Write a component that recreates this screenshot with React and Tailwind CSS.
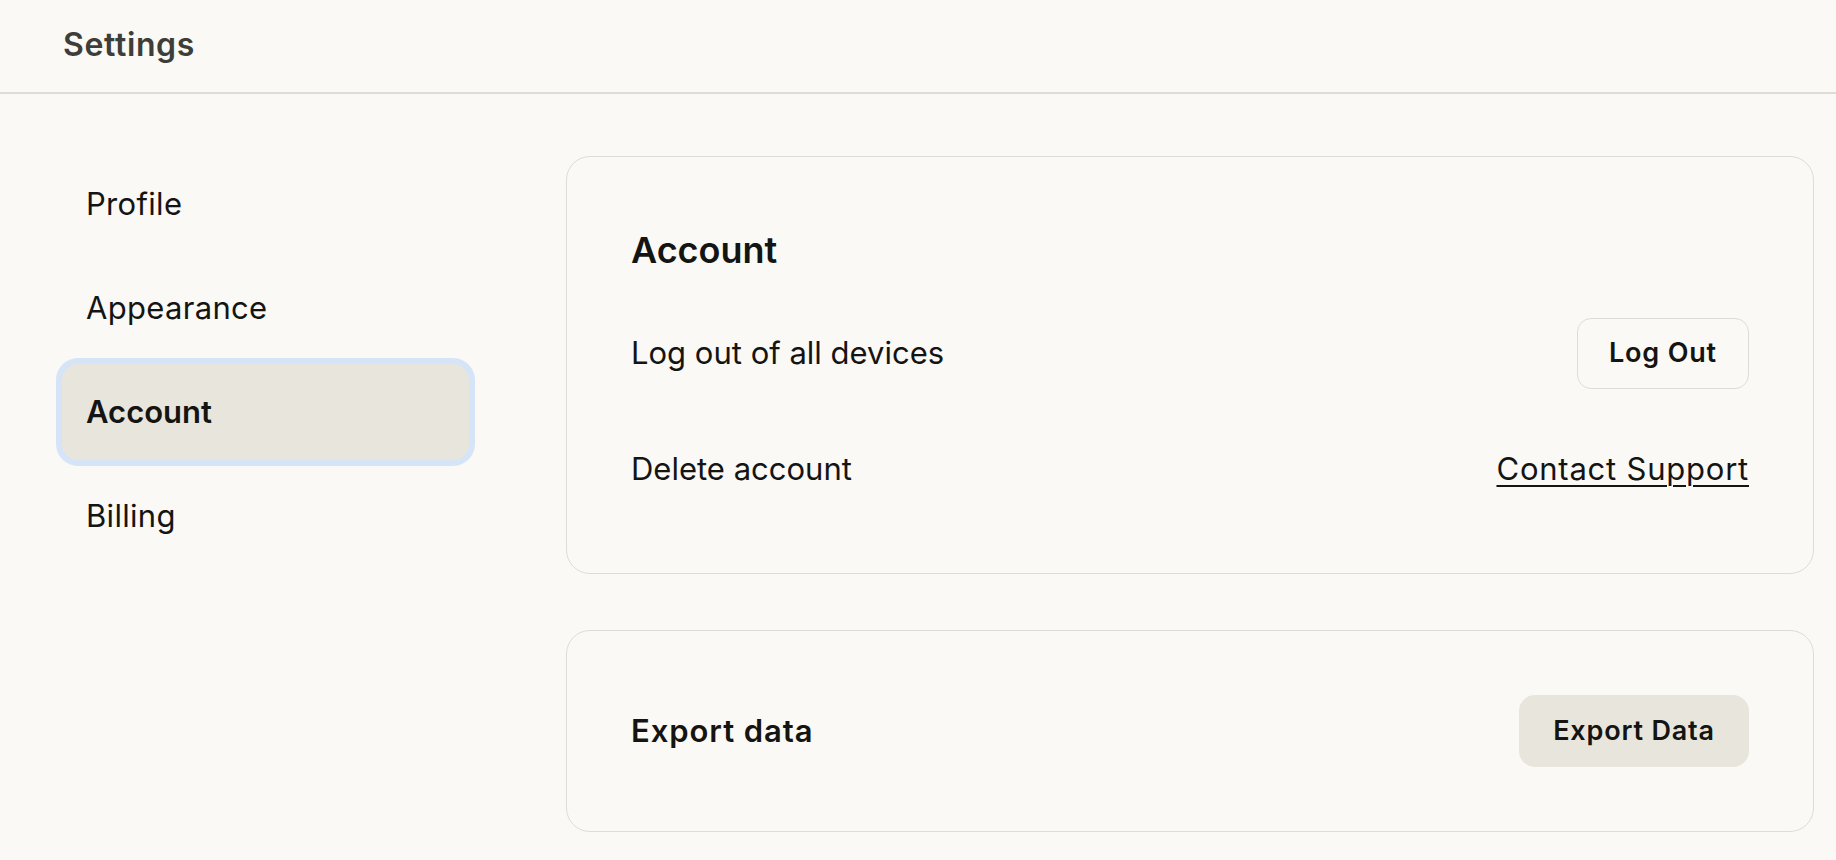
import React, { useState } from "react";

const navItems = ["Profile", "Appearance", "Account", "Billing"];

export default function App() {
  const [active, setActive] = useState("Account");

  return (
    <div
      className="min-h-screen bg-[#faf9f5] text-[#141413]"
      style={{ fontFamily: "Inter, 'Noto Sans', sans-serif" }}
    >
      <header className="h-[94px] border-b-2 border-[#dedcd6] flex items-center pl-[63px] pb-[3px]">
        <h1 className="text-[32px] font-semibold text-[#3d3d3a] tracking-[0.02em]">Settings</h1>
      </header>

      <div className="flex pl-[62px] pr-[22px] pt-[62px] pb-8">
        <nav className="w-[407px] shrink-0 flex flex-col gap-2">
          {navItems.map((item) => (
            <button
              key={item}
              onClick={() => setActive(item)}
              className={
                item === active
                  ? "h-[96px] px-6 flex items-center rounded-2xl bg-[#e8e6dc] ring-[6px] ring-[#d5e5f7] text-[31px] font-semibold text-left"
                  : "h-[96px] px-6 flex items-center rounded-2xl text-[31px] text-left tracking-[0.01em] hover:bg-[#f0eee6]"
              }
            >
              {item}
            </button>
          ))}
        </nav>

        <main className="flex-1 ml-[97px] flex flex-col gap-[56px]">
          <section className="border border-[#dedcd6] rounded-3xl px-16 pt-16 pb-[68px] flex flex-col">
            <h2 className="h-[48px] mt-[5px] flex items-center text-[36px] font-semibold">Account</h2>
            <div className="h-[72px] mt-[43px] flex items-center justify-between">
              <span className="text-[31px]">Log out of all devices</span>
              <button className="h-[71px] w-[172px] rounded-[14px] border border-[#dedcd6] text-[27px] font-semibold tracking-[0.03em]">
                Log Out
              </button>
            </div>
            <div className="h-[72px] mt-[44px] flex items-center justify-between">
              <span className="text-[31px]">Delete account</span>
              <a href="#" className="text-[31px] tracking-[0.025em] underline decoration-2 underline-offset-[5px]">
                Contact Support
              </a>
            </div>
          </section>

          <section className="border border-[#dedcd6] rounded-3xl px-16 py-16 flex items-center justify-between">
            <h2 className="text-[31px] font-semibold tracking-[0.03em]">Export data</h2>
            <button className="h-[72px] w-[230px] rounded-2xl bg-[#e8e6dc] text-[27px] font-semibold tracking-[0.03em]">
              Export Data
            </button>
          </section>
        </main>
      </div>
    </div>
  );
}
